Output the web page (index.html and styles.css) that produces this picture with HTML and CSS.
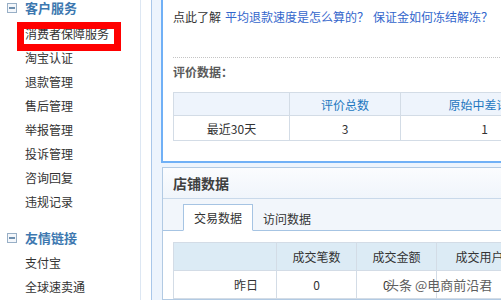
FILE: index.html
```html
<!DOCTYPE html>
<html lang="zh-CN">
<head>
<meta charset="utf-8">
<title>客户服务</title>
<link rel="stylesheet" href="styles.css">
</head>
<body>
<div class="page">
  <aside class="sidebar">
    <div class="group">
      <h3 class="group-title"><span class="toggle"></span>客户服务</h3>
      <ul class="menu">
        <li class="menu-item is-marked"><span class="mark"></span>消费者保障服务</li>
        <li class="menu-item">淘宝认证</li>
        <li class="menu-item">退款管理</li>
        <li class="menu-item">售后管理</li>
        <li class="menu-item">举报管理</li>
        <li class="menu-item">投诉管理</li>
        <li class="menu-item">咨询回复</li>
        <li class="menu-item">违规记录</li>
      </ul>
    </div>
    <div class="group group-links">
      <h3 class="group-title"><span class="toggle"></span>友情链接</h3>
      <ul class="menu">
        <li class="menu-item">支付宝</li>
        <li class="menu-item">全球速卖通</li>
      </ul>
    </div>
  </aside>
  <div class="spacer"></div>
  <main class="main">
    <section class="panel panel-top">
      <p class="tip">点此了解<a class="link">平均退款速度是怎么算的？</a><a class="link">保证金如何冻结解冻？</a></p>
      <div class="rule"></div>
      <h4 class="sub-title">评价数据：</h4>
      <table class="grid grid-rate">
        <colgroup><col class="c1"><col class="c2"><col class="c3"></colgroup>
        <thead><tr><th></th><th>评价总数</th><th>原始中差评数</th></tr></thead>
        <tbody><tr><td>最近30天</td><td>3</td><td>1</td></tr></tbody>
      </table>
    </section>
    <section class="panel panel-store">
      <header class="panel-head">店铺数据</header>
      <nav class="tabs"><span class="tab is-active">交易数据</span><span class="tab">访问数据</span></nav>
      <div class="panel-body">
        <table class="grid grid-trade">
          <colgroup><col class="d1"><col class="d2"><col class="d3"><col class="d4"></colgroup>
          <thead><tr><th></th><th>成交笔数</th><th>成交金额</th><th>成交用户数</th></tr></thead>
          <tbody><tr><td class="label">昨日</td><td>0</td><td class="amount">0</td><td></td></tr></tbody>
        </table>
      </div>
    </section>
  </main>
  <div class="watermark">头条 @电商前沿君</div>
</div>
</body>
</html>
```
FILE: styles.css
```css
html, body {
  margin: 0;
  padding: 0;
  width: 501px;
  height: 300px;
  overflow: hidden;
  background: #fff;
}
body {
  font-family: "Noto Sans CJK SC", "Noto Sans", sans-serif;
  font-size: 12px;
  color: #333;
}
.page {
  position: relative;
  display: flex;
  width: 760px;
  height: 300px;
}
.sidebar {
  width: 140px;
  flex: none;
  border-right: 1px solid #dde7f3;
  background: #fff;
}
.group {
  margin: 0;
}
.group-links {
  margin-top: 16px;
}
.group-title {
  display: flex;
  align-items: center;
  margin: 0;
  padding: 0 0 6px 7px;
  height: 16px;
  line-height: 16px;
  font-size: 13px;
  font-weight: bold;
  color: #3d78b0;
}
.group-links .group-title {
  padding-bottom: 5px;
}
.toggle {
  position: relative;
  box-sizing: border-box;
  width: 10px;
  height: 10px;
  margin-right: 8px;
  border: 1px solid #98afc6;
  background: #f4f7fb;
}
.toggle::after {
  content: "";
  position: absolute;
  left: 1px;
  right: 1px;
  top: 3px;
  height: 2px;
  background: #6f8fae;
}
.menu {
  list-style: none;
  margin: 0;
  padding: 0 0 0 25px;
}
.menu-item {
  position: relative;
  height: 24px;
  line-height: 24px;
  color: #333;
  white-space: nowrap;
}
.mark {
  position: absolute;
  left: -8px;
  top: 0;
  width: 104px;
  height: 29px;
  box-sizing: border-box;
  border: 7px solid #ff0000;
}
.spacer {
  width: 10px;
  flex: none;
  background: #fff;
}
.main {
  flex: 1;
  display: flex;
  flex-direction: column;
  border-left: 1px solid #a9c7ea;
  background: #edf4fd;
  padding-left: 9px;
}
.panel {
  background: #fff;
}
.panel-top {
  border-left: 2px solid #70b0f6;
  border-bottom: 2px solid #70b0f6;
  padding: 8px 0 20px 10px;
}
.tip {
  margin: 0;
  line-height: 18px;
  white-space: nowrap;
}
.link {
  color: #3366cc;
  margin-left: 4px;
  text-decoration: none;
}
.rule {
  margin-top: 31px;
  border-top: 1px dotted #c4c4c4;
}
.sub-title {
  margin: 5px 0 0;
  line-height: 18px;
  font-size: 12px;
  font-weight: bold;
  color: #5a5a5a;
}
.grid {
  border-collapse: collapse;
  table-layout: fixed;
}
.grid th, .grid td {
  border: 1px solid #d3dce6;
  padding: 0;
  text-align: center;
  font-weight: normal;
  white-space: nowrap;
  overflow: hidden;
}
.grid-rate {
  margin-top: 11px;
  width: 395px;
}
.grid-rate .c1 { width: 116px; }
.grid-rate .c2 { width: 111px; }
.grid-rate .c3 { width: 168px; }
.grid-rate th {
  height: 22px;
  background: #eef4fc;
  color: #2277c0;
}
.grid-rate td {
  height: 24px;
}
.panel-store {
  margin-top: 4px;
  margin-left: 1px;
  border: 1px solid #b2cae3;
  border-right: none;
}
.panel-head {
  height: 30px;
  line-height: 30px;
  padding-left: 10px;
  font-size: 14px;
  font-weight: bold;
  color: #404040;
  background: linear-gradient(#fbfcfe, #f0f5fb);
  border-bottom: 1px solid #c9d9ea;
}
.tabs {
  display: flex;
  align-items: flex-end;
  height: 31px;
  padding-left: 20px;
  background: #f2f6fb;
  border-bottom: 1px solid #a6c4e3;
}
.tab {
  height: 25px;
  line-height: 25px;
  padding: 0 10px;
  margin-bottom: -1px;
  color: #333;
}
.tab.is-active {
  background: #fff;
  border: 1px solid #a6c4e3;
  border-bottom: 1px solid #fff;
}
.panel-body {
  padding: 11px 0 0 10px;
  background: #fff;
}
.grid-trade {
  width: 361px;
}
.grid-trade .d1 { width: 103px; }
.grid-trade .d2 { width: 80px; }
.grid-trade .d3 { width: 80px; }
.grid-trade .d4 { width: 98px; }
.grid-trade th {
  height: 27px;
  background: #dcebf5;
  color: #333;
}
.grid-trade td {
  height: 27px;
}
.grid-trade td.label {
  text-align: right;
  padding-right: 18px;
}
.grid-trade td.amount {
  text-align: left;
  padding-left: 26px;
}
.watermark {
  position: absolute;
  left: 386px;
  top: 277px;
  font-size: 13px;
  line-height: 16px;
  color: #5e5e5e;
  text-shadow: 0 0 1px #fff, 0 0 1px #fff, 0 0 2px #fff;
  white-space: nowrap;
}
```
